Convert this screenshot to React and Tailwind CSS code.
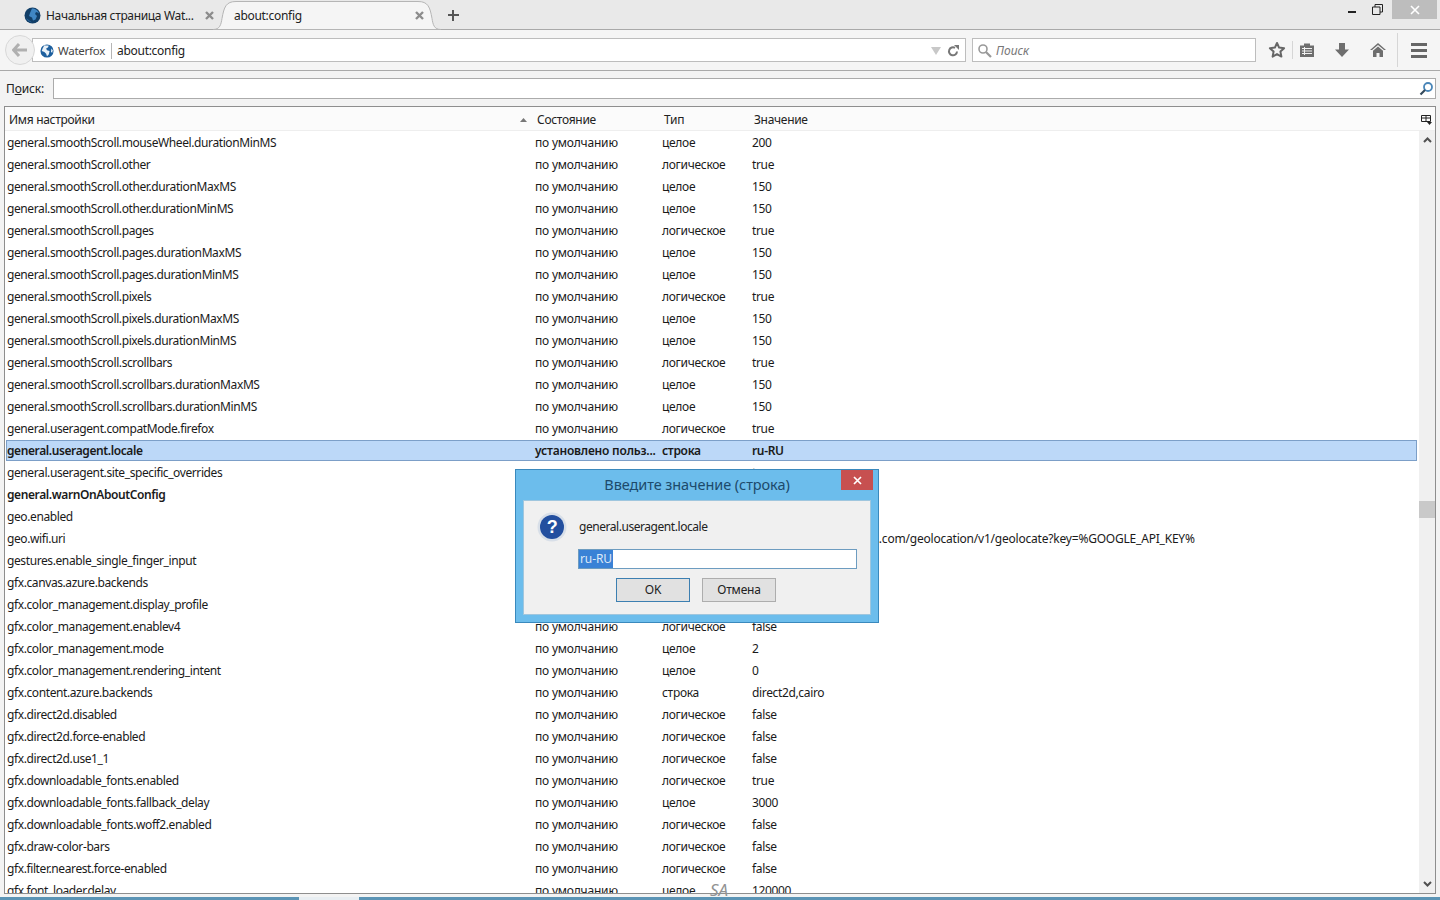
import React from "react";

const D = "по умолчанию";
const INT = "целое";
const BOOL = "логическое";
const STR = "строка";

const rows = [
  ["general.smoothScroll.mouseWheel.durationMinMS", D, INT, "200"],
  ["general.smoothScroll.other", D, BOOL, "true"],
  ["general.smoothScroll.other.durationMaxMS", D, INT, "150"],
  ["general.smoothScroll.other.durationMinMS", D, INT, "150"],
  ["general.smoothScroll.pages", D, BOOL, "true"],
  ["general.smoothScroll.pages.durationMaxMS", D, INT, "150"],
  ["general.smoothScroll.pages.durationMinMS", D, INT, "150"],
  ["general.smoothScroll.pixels", D, BOOL, "true"],
  ["general.smoothScroll.pixels.durationMaxMS", D, INT, "150"],
  ["general.smoothScroll.pixels.durationMinMS", D, INT, "150"],
  ["general.smoothScroll.scrollbars", D, BOOL, "true"],
  ["general.smoothScroll.scrollbars.durationMaxMS", D, INT, "150"],
  ["general.smoothScroll.scrollbars.durationMinMS", D, INT, "150"],
  ["general.useragent.compatMode.firefox", D, BOOL, "true"],
  ["general.useragent.locale", "установлено польз...", STR, "ru-RU", "selected"],
  ["general.useragent.site_specific_overrides", D, BOOL, "true"],
  ["general.warnOnAboutConfig", "установлено польз...", BOOL, "false", "bold"],
  ["geo.enabled", D, BOOL, "true"],
  ["geo.wifi.uri", D, STR, "https://www.googleapis.com/geolocation/v1/geolocate?key=%GOOGLE_API_KEY%"],
  ["gestures.enable_single_finger_input", D, BOOL, "true"],
  ["gfx.canvas.azure.backends", D, STR, "direct2d,skia"],
  ["gfx.color_management.display_profile", D, STR, ""],
  ["gfx.color_management.enablev4", D, BOOL, "false"],
  ["gfx.color_management.mode", D, INT, "2"],
  ["gfx.color_management.rendering_intent", D, INT, "0"],
  ["gfx.content.azure.backends", D, STR, "direct2d,cairo"],
  ["gfx.direct2d.disabled", D, BOOL, "false"],
  ["gfx.direct2d.force-enabled", D, BOOL, "false"],
  ["gfx.direct2d.use1_1", D, BOOL, "false"],
  ["gfx.downloadable_fonts.enabled", D, BOOL, "true"],
  ["gfx.downloadable_fonts.fallback_delay", D, INT, "3000"],
  ["gfx.downloadable_fonts.woff2.enabled", D, BOOL, "false"],
  ["gfx.draw-color-bars", D, BOOL, "false"],
  ["gfx.filter.nearest.force-enabled", D, BOOL, "false"],
  ["gfx.font_loader.delay", D, INT, "120000"],
];

const Globe = ({ size = 16 }) => (
  <svg width={size} height={size} viewBox="0 0 16 16" className="shrink-0">
    <circle cx="8" cy="8" r="7.5" fill="#1d5f9e" />
    <path d="M5 1.5c2 .5 4 0 5 .5l-1 2-2 1 1 2 3 1-1 4-2 2-1-3-2-2-3-1 1-3z" fill="#e8f1f8" />
    <path d="M13 5l1.5 2-.5 3-1.5-1z" fill="#e8f1f8" />
  </svg>
);

// tab favicon is darker than the identity globe
const TabLogo = () => (
  <svg width="17" height="17" viewBox="0 0 17 17" className="shrink-0">
    <circle cx="8.5" cy="8.5" r="8" fill="#123f68" />
    <path d="M8 1.500c3 0 6 1.500 7 5-1-1-2-1.500-3-1.500l-1 2 2 2-1.500 3.500-2.500 1-1-3-3-1.500 1-3z" fill="#3f86c4" />
    <path d="M2 11c1 2 3 4 6 4.500-2-1.500-4-3-6-4.500z" fill="#2a6aa3" />
  </svg>
);

const TabX = () => (
  <svg width="9" height="9" viewBox="0 0 9 9" className="shrink-0">
    <path d="M1 1l7 7M8 1L1 8" stroke="#8c8c8c" strokeWidth="2.4" />
  </svg>
);

const ToolbarIcons = () => (
  <div className="flex items-center ml-[12px]">
    <svg width="18" height="18" viewBox="0 0 18 18">
      <path d="M9 2l2.1 4.6 5 .6-3.7 3.4 1 5L9 13.1l-4.4 2.5 1-5L1.900 7.200l5-.6z" fill="none" stroke="#666" strokeWidth="2" strokeLinejoin="round" />
    </svg>
    <div className="w-px h-[18px] bg-[#d6d6d6] ml-[6px]" />
    <svg width="16" height="16" viewBox="0 0 16 16" className="ml-[6px]">
      <path d="M1 3.500h4V1.500h6v2h4V15H1z" fill="#6e6e6e" />
      <path d="M3 6.500h10M3 9h10M3 11.500h10M5.500 5v8" stroke="#f2f2f2" strokeWidth="1" />
    </svg>
    <svg width="16" height="16" viewBox="0 0 16 16" className="ml-[19px]">
      <path d="M5 1h6v6.500h4L8 15 1 7.500h4z" fill="#6e6e6e" />
    </svg>
    <svg width="18" height="16" viewBox="0 0 18 16" className="ml-[19px]">
      <path d="M9 1L1 8h2l6-5 6 5h2z" fill="#6e6e6e" />
      <path d="M9 4.500L4 8.800V15h3.500v-4h3v4H14V8.800z" fill="#6e6e6e" />
    </svg>
    <div className="w-px h-[34px] bg-[#d6d6d6] ml-[10px]" />
    <div className="flex flex-col gap-[3px] ml-[13px]">
      <div className="w-[16px] h-[3px] bg-[#666]" />
      <div className="w-[16px] h-[3px] bg-[#666]" />
      <div className="w-[16px] h-[3px] bg-[#666]" />
    </div>
  </div>
);

const ConfigRow = ({ row }) => {
  const [name, state, type, value, mark] = row;
  const isSelected = mark === "selected";
  const isBold = Boolean(mark);
  const isLong = value.length > 20;
  return (
    <div
      className={`grid items-center text-[12px] text-[#1a1a1a] whitespace-nowrap ${
        isSelected
          ? "grid-cols-[527px_127px_90px_1fr] h-[21px] mb-px ml-px mr-[2px] bg-[#bcd8f8] outline outline-[#7c9fc8] -outline-offset-1"
          : "grid-cols-[528px_127px_90px_1fr] h-[22px]"
      } ${isBold ? "font-semibold" : ""}`}
    >
      <div className={`tracking-[-0.4px] ${isSelected ? "pl-[1px]" : "pl-[2px]"}`}>{name}</div>
      <div className="pl-[2px] tracking-[-0.2px]">{state}</div>
      <div className="pl-[2px] tracking-[-0.3px]">{type}</div>
      <div className={isLong ? "pl-[2px] tracking-[-0.21px] -ml-[3px]" : "pl-[2px] tracking-[-0.35px]"}>{value}</div>
    </div>
  );
};

const App = () => {
  return (
    <div className="relative h-[900px] w-[1440px] overflow-hidden bg-[#f3f3f3] font-['Noto_Sans',sans-serif] text-[#222] flex flex-col">
      {/* tab strip */}
      <div className="relative h-[30px] shrink-0 bg-[#e9e9e9] border-b border-[#a9a9a9] flex items-center">
        <svg width="228" height="30" viewBox="0 0 228 30" className="absolute left-[213px] top-0">
          <path
            d="M0 29.500c7 0 8-5 9-11C11 7 13 1.500 23 1.500h182c10 0 12 5.500 14 17 1 6 2 11 9 11z"
            fill="#f5f5f5"
            stroke="#b5b5b5"
          />
        </svg>
        <div className="relative flex items-center w-[222px] pl-[24px] pr-[8px] pt-[2px] h-full">
          <TabLogo />
          <span className="ml-[5px] text-[12px] tracking-[-0.34px] whitespace-nowrap flex-1">Начальная страница Wat...</span>
          <TabX />
        </div>
        <div className="relative flex items-center w-[208px] pl-[12px] pr-[6px] pt-[2px] h-full">
          <span className="text-[12px] tracking-[-0.3px] flex-1">about:config</span>
          <TabX />
        </div>
        <div className="relative ml-[18px] mt-[2px] w-[11px] h-[11px]">
          <div className="absolute left-0 top-[4px] w-[11px] h-[2px] bg-[#555]" />
          <div className="absolute left-[4px] top-0 w-[2px] h-[11px] bg-[#555]" />
        </div>
        <div className="ml-auto flex items-start self-start h-[19px]">
          <div className="w-[8px] h-[2px] bg-[#222] mt-[11px]" />
          <svg width="11" height="11" viewBox="0 0 11 11" className="ml-[16px] mt-[4px]">
            <path d="M.500 3h7.500v7.500H.500zM3 3V.500h7.500V8H8" fill="none" stroke="#222" />
          </svg>
          <div className="w-[45px] h-[19px] bg-[#bdbdbd] ml-[9px] mr-[3px] flex items-center justify-center">
            <svg width="10" height="10" viewBox="0 0 10 10">
              <path d="M1 1l8 8M9 1l-8 8" stroke="#fff" strokeWidth="1.600" />
            </svg>
          </div>
        </div>
      </div>

      {/* nav bar */}
      <div className="relative h-[41px] shrink-0 bg-[#f5f5f5] border-b border-[#a9a9a9] flex items-center pl-[5px] pr-[12px]">
        <div className="relative z-10 w-[30px] h-[30px] rounded-full bg-[#f0f0f0] border border-[#d8d8d8] flex items-center justify-center">
          <svg width="16" height="14" viewBox="0 0 16 14">
            <path d="M7 1L1.500 7 7 13M2 7h13" fill="none" stroke="#b0b0b0" strokeWidth="3" />
          </svg>
        </div>
        <div className="-ml-[3px] w-[934px] h-[24px] bg-white border border-[#bdbdbd] flex items-center pl-[7px] pr-[6px] pt-[1px]">
          <Globe size={14} />
          <span className="ml-[4px] text-[11.500px] tracking-[-0.25px] text-[#444]">Waterfox</span>
          <div className="w-px h-[16px] bg-[#b5b5b5] ml-[6px]" />
          <span className="ml-[5px] text-[12px] tracking-[-0.3px]">about:config</span>
          <svg width="10" height="8" viewBox="0 0 10 8" className="ml-auto">
            <path d="M0 0h10L5 8z" fill="#c8c8c8" />
          </svg>
          <svg width="12" height="12" viewBox="0 0 12 12" className="ml-[6px]">
            <path d="M10 6.500A4 4 0 1 1 8 2.800" fill="none" stroke="#777" strokeWidth="2" />
            <path d="M7 0h5v5z" fill="#777" />
          </svg>
        </div>
        <div className="ml-[6px] w-[284px] h-[24px] bg-white border border-[#bdbdbd] flex items-center pl-[4px] pt-[1px]">
          <svg width="15" height="15" viewBox="0 0 15 15">
            <circle cx="6" cy="6" r="4" fill="none" stroke="#999" strokeWidth="1.600" />
            <path d="M9 9l5 5" stroke="#999" strokeWidth="2.200" />
          </svg>
          <span className="ml-[4px] text-[12px] italic text-[#777]">Поиск</span>
        </div>
        <ToolbarIcons />
      </div>

      {/* about:config search */}
      <div className="h-[35px] shrink-0 flex items-center pl-[6px] pr-[4px]">
        <span className="text-[12px] tracking-[-0.15px] w-[47px]">
          П<span className="underline">о</span>иск:
        </span>
        <div className="flex-1 h-[21px] bg-white border border-[#ababab] flex items-center justify-end pr-[1px]">
          <svg width="15" height="15" viewBox="0 0 15 15">
            <circle cx="9" cy="6" r="4" fill="none" stroke="#4a86b8" strokeWidth="1.800" />
            <path d="M6 9l-4.500 4.500" stroke="#33495c" strokeWidth="2.200" />
          </svg>
        </div>
      </div>

      {/* prefs table */}
      <div className="mx-[4px] h-[788px] shrink-0 bg-white border border-[#8e8e8e] flex flex-col overflow-hidden">
        <div className="h-[24px] shrink-0 bg-[#fbfbfb] border-b border-[#eeeeee] flex items-center text-[12px] tracking-[-0.3px] pt-[2px]">
          <div className="w-[528px] pl-[4px] pr-[6px] flex items-center justify-between">
            <span>Имя настройки</span>
            <svg width="7" height="4" viewBox="0 0 7 4">
              <path d="M3.500 0L7 4H0z" fill="#777" />
            </svg>
          </div>
          <div className="w-[127px] pl-[4px]">Состояние</div>
          <div className="w-[90px] pl-[4px]">Тип</div>
          <div className="flex-1 pl-[4px]">Значение</div>
          <svg width="11" height="11" viewBox="0 0 11 11" className="mr-[3px]">
            <path d="M.500 1.500h9v6h-9zM.500 4h9M5 1.500v6" fill="none" stroke="#222" />
            <path d="M6 8h5L8.500 11z" fill="#222" />
          </svg>
        </div>
        <div className="flex-1 flex min-h-0">
          <div className="flex-1 min-w-0 overflow-hidden pt-px">
            {rows.map((row) => (
              <ConfigRow key={row[0]} row={row} />
            ))}
          </div>
          <div className="w-[16px] shrink-0 bg-[#f0f0f0] flex flex-col items-center">
            <svg width="9" height="6" viewBox="0 0 9 6" className="mt-[6px]">
              <path d="M1 5l3.500-3.500L8 5" fill="none" stroke="#505050" strokeWidth="2" />
            </svg>
            <div className="w-full h-[17px] bg-[#c9c9c9] mt-[358px]" />
            <svg width="9" height="6" viewBox="0 0 9 6" className="mt-auto mb-[6px]">
              <path d="M1 1l3.500 3.500L8 1" fill="none" stroke="#505050" strokeWidth="2" />
            </svg>
          </div>
        </div>
      </div>

      {/* taskbar edge */}
      <div className="mt-[3px] flex-1 bg-[#5b94b5] pl-[299px]">
        <div className="w-[60px] h-full bg-[#e8eef2]" />
      </div>

      {/* watermark */}
      <span className="absolute left-[710px] top-[877px] text-[17px] italic text-[#929292]">SA</span>

      {/* value prompt */}
      <div className="absolute left-[515px] top-[469px] w-[364px] h-[154px] bg-[#6cbdec] border border-[#3a89bd] px-[7px] pb-[7px] flex flex-col">
        <div className="relative h-[30px] shrink-0 flex items-center justify-center text-[14.500px] tracking-[-0.08px] text-[#1d4a6b]">
          Введите значение (строка)
          <div className="absolute right-[-2px] top-0 w-[32px] h-[20px] bg-[#c75050] flex items-center justify-center">
            <svg width="9" height="9" viewBox="0 0 9 9">
              <path d="M1 1l7 7M8 1l-7 7" stroke="#fff" strokeWidth="1.700" />
            </svg>
          </div>
        </div>
        <div className="flex-1 bg-[#f0f0f0] border border-[#9fc6de] pl-[13px] pt-[11px] text-[12px] tracking-[-0.45px]">
          <div className="flex items-center h-[30px]">
            <svg width="30" height="30" viewBox="0 0 30 30" className="shrink-0">
              <circle cx="15" cy="15" r="14.500" fill="#d8dfe8" />
              <circle cx="15" cy="15" r="12" fill="#234f9f" />
              <text x="15" y="21" textAnchor="middle" fill="#fff" fontSize="18" fontWeight="700" fontFamily="Liberation Sans">?</text>
            </svg>
            <span className="ml-[12px]">general.useragent.locale</span>
          </div>
          <div className="ml-[41px] mt-[7px] w-[279px] h-[20px] bg-white border border-[#6d9cc0] flex items-center">
            <span className="bg-[#3a82d6] text-[#dce9f7] leading-[18px] px-[1px] tracking-[-0.1px]">ru-RU</span>
          </div>
          <div className="ml-[79px] mt-[9px] flex gap-[12px] tracking-[-0.2px]">
            <div className="w-[74px] h-[24px] bg-[#e1e1e1] border border-[#3c7fb1] flex items-center justify-center">OK</div>
            <div className="w-[74px] h-[24px] bg-[#e1e1e1] border border-[#adadad] flex items-center justify-center">Отмена</div>
          </div>
        </div>
      </div>
    </div>
  );
};

export default App;
